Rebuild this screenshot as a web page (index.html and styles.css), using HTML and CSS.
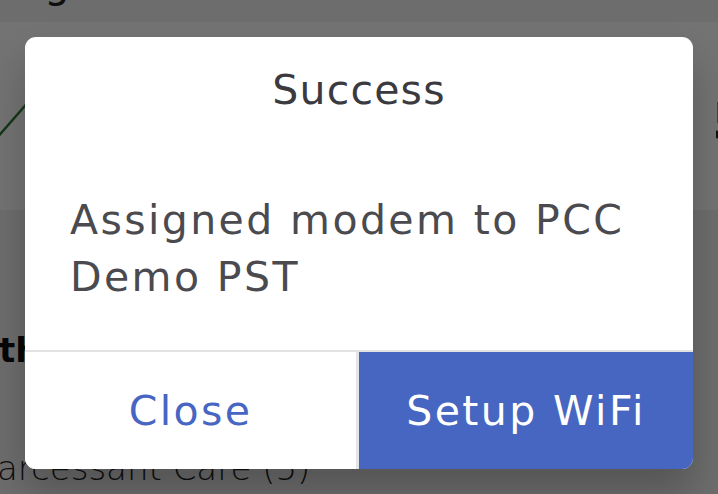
FILE: index.html
```html
<!DOCTYPE html>
<html lang="en">
<head>
<meta charset="utf-8">
<title>Success</title>
<link rel="stylesheet" href="styles.css">
</head>
<body>
<div class="page">
  <h1 class="page-title">Assignments</h1>
  <div class="page-strip"></div>
  <div class="chart">
    <svg class="chart-line" width="718" height="188" viewBox="0 0 718 188">
      <polyline points="-5,118 30,78 60,40" fill="none" stroke="#2e7d32" stroke-width="2.5"/>
    </svg>
    <div class="chart-value">5</div>
  </div>
  <div class="section">
    <div class="section-head">Other</div>
    <div class="section-item">arcessant Care (5)</div>
  </div>
</div>
<div class="overlay">
  <div class="dialog" role="dialog">
    <div class="dialog-title">Success</div>
    <div class="dialog-body">Assigned modem to PCC Demo PST</div>
    <div class="dialog-actions">
      <button class="btn btn-close">Close</button>
      <button class="btn btn-primary">Setup WiFi</button>
    </div>
  </div>
</div>
</body>
</html>
```
FILE: styles.css
```css
* { box-sizing: border-box; }
html, body {
  margin: 0;
  padding: 0;
  width: 718px;
  height: 494px;
  overflow: hidden;
}
body {
  position: relative;
  background: #ffffff;
  font-family: "DejaVu Sans", "Noto Sans", sans-serif;
}
.page {
  width: 718px;
  height: 494px;
  display: flex;
  flex-direction: column;
  overflow: hidden;
}
.page-title {
  margin: -40px 0 0 0;
  height: 46px;
  flex: 0 0 46px;
  font-size: 40px;
  font-weight: 400;
  line-height: 46px;
  color: #222;
  background: #f2f2f2;
  text-indent: -40px;
  letter-spacing: 1px;
}
.page-strip {
  flex: 0 0 16px;
  background: #f2f2f2;
}
.chart {
  flex: 0 0 188px;
  background: #ffffff;
  position: relative;
}
.chart-line { display: block; }
.chart-value {
  position: absolute;
  left: 712px;
  top: 70px;
  font-size: 52px;
  font-weight: 700;
  color: #222;
}
.section {
  flex: 1;
  background: #f1f1f1;
  padding-top: 120px;
}
.section-head {
  font-size: 34px;
  font-weight: 700;
  color: #111;
  margin-left: -30px;
  line-height: 40px;
}
.section-item {
  margin-top: 78px;
  margin-left: -3px;
  font-size: 34px;
  color: #222;
  line-height: 40px;
  font-weight: 300;
}
.overlay {
  position: absolute;
  inset: 0;
  background: rgba(0, 0, 0, 0.55);
  display: flex;
  justify-content: center;
  align-items: flex-start;
  padding-top: 37px;
}
.dialog {
  width: 668px;
  height: 432px;
  background: #ffffff;
  border-radius: 11px;
  overflow: hidden;
  display: flex;
  flex-direction: column;
  box-shadow: 0 24px 38px rgba(0, 0, 0, 0.22);
}
.dialog-title {
  padding-top: 25px;
  height: 82px;
  line-height: 57px;
  font-size: 41px;
  text-align: center;
  color: #3a3a3f;
  font-weight: 400;
  letter-spacing: 1.2px;
}
.dialog-body {
  padding: 73px 30px 0 45px;
  height: 231px;
  font-size: 41px;
  line-height: 57px;
  color: #4a4a4f;
  font-weight: 400;
  letter-spacing: 2.4px;
}
.dialog-actions {
  flex: 1;
  display: flex;
  border-top: 2px solid #e2e2e4;
}
.btn {
  flex: 1;
  border: 0;
  margin: 0;
  padding: 0;
  font-family: inherit;
  font-size: 41px;
  font-weight: 400;
  letter-spacing: 2.4px;
  background: #ffffff;
  cursor: pointer;
}
.btn-close {
  color: #4666c2;
  border-right: 3px solid #e4e4e6;
  flex: 0 0 334px;
}
.btn-primary {
  background: #4666c2;
  color: #ffffff;
}
```
